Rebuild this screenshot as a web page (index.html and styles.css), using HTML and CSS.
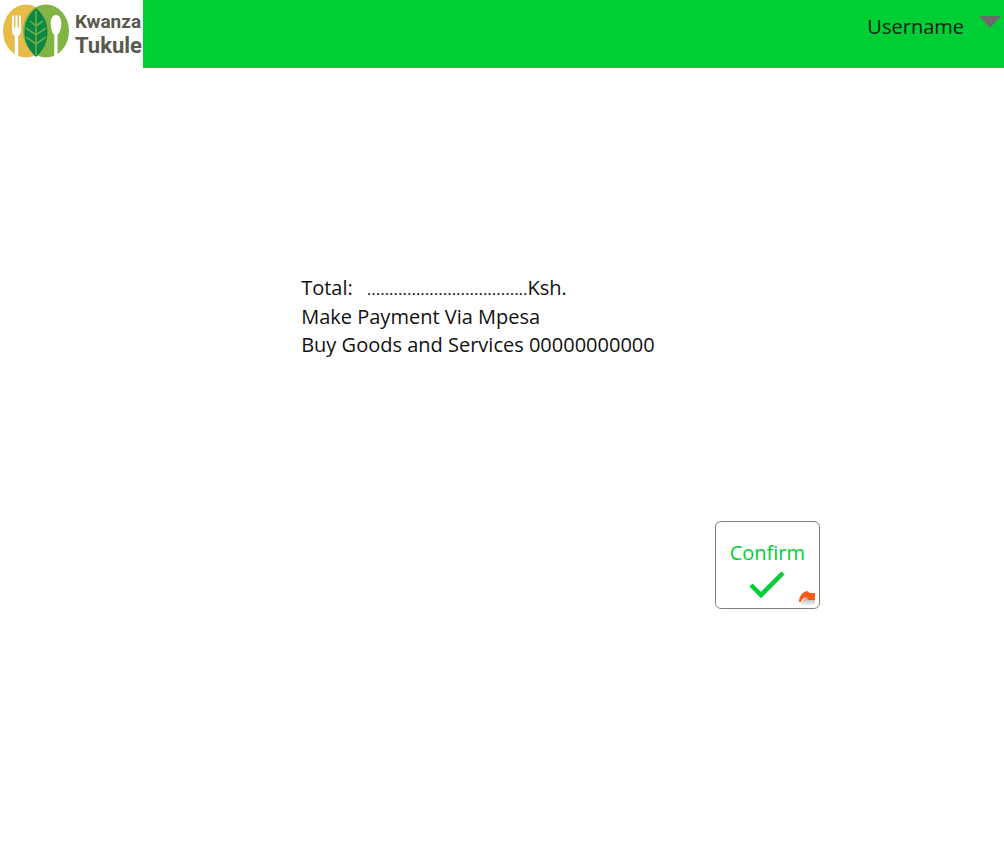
FILE: index.html
```html
<!DOCTYPE html>
<html lang="en">
<head>
<meta charset="utf-8">
<meta name="viewport" content="width=device-width, initial-scale=1">
<title>Kwanza Tukule - Payment</title>
<link rel="stylesheet" href="styles.css">
</head>
<body>
<header class="topbar">
  <a class="brand" href="#">
    <svg class="brand-mark" viewBox="0 0 66 54" aria-hidden="true">
      <ellipse cx="23" cy="27" rx="23" ry="26.500" fill="#e6bb48"/>
      <ellipse cx="43" cy="27" rx="23" ry="26.500" fill="#80b444"/>
      <path d="M33 4C25 11 21.500 19 21.500 29c0 9 4 17 11.500 24 7.500-7 11.500-15 11.500-24C44.500 19 41 11 33 4z" fill="#0d8543"/>
      <path d="M33 7V51M33 22l7-5M33 31l10-7M33 40l10-7M33 22l-6-5M33 31l-10-7M33 40l-10-7" fill="none" stroke="#6aac48" stroke-width="1.600"/>
      <path d="M9 11.500h2v12h1.500v-12h2v12H16v-12h2V27c0 3-1.500 4-2.800 5v20l-3.400-1V32C10.500 31 9 30 9 27z" fill="#fff"/>
      <path d="M53 11c3.800 0 5.300 4 5.300 9s-1.800 9-3.800 11v20l-3.200 1V31c-2-2-3.600-6-3.600-11s1.500-9 5.300-9z" fill="#fff"/>
    </svg>
    <span class="brand-name"><span class="brand-first">Kwanza</span><span class="brand-second">Tukule</span></span>
  </a>
  <button class="user-menu" type="button">
    <span>Username</span>
    <svg class="caret" viewBox="0 0 22 12" aria-hidden="true"><path d="M0 0h22L11 12z" fill="#6b6b6b"/></svg>
  </button>
</header>
<main class="payment">
  <section class="details">
    <p class="total"><span>Total:</span><span><span class="leader">....................................</span>Ksh.</span></p>
    <p>Make Payment Via Mpesa</p>
    <p>Buy Goods and Services 00000000000</p>
  </section>
  <button class="confirm" type="button">
    <span>Confirm</span>
    <svg class="check" viewBox="0 0 36 28" aria-hidden="true"><path d="M2 14l10 10L34 2" fill="none" stroke="#00ce35" stroke-width="4.500"/></svg>
    <svg class="badge" viewBox="0 0 20 18" aria-hidden="true">
      <defs><linearGradient id="shade" x1="0" y1="0" x2="0" y2="1"><stop offset="0" stop-color="#999"/><stop offset="1" stop-color="#fff"/></linearGradient></defs>
      <path d="M3 14L8 7l9 3v5l-4 2H4z" fill="url(#shade)"/>
      <path d="M1 13C1 8 4 3 9 2l3 2h5v7h-7l-1-3C6 8 4 10 3 13z" fill="#f95a16"/>
    </svg>
  </button>
</main>
</body>
</html>
```
FILE: styles.css
```css
* { box-sizing: border-box; }
body {
  margin: 0;
  background: #fff;
  color: #111;
  font-family: "Open Sans", "Noto Sans", sans-serif;
  font-size: 20px;
  line-height: 28px;
}
button { font: inherit; cursor: pointer; }
p { margin: 0; }
.topbar {
  display: flex;
  justify-content: space-between;
  align-items: flex-start;
  height: 68px;
  background: #00ce35;
}
.brand {
  display: flex;
  align-items: flex-start;
  gap: 6px;
  width: 143px;
  height: 68px;
  padding: 4px 0 0 3px;
  background: #fff;
  color: #5a594e;
  text-decoration: none;
}
.brand-mark { flex: none; width: 66px; height: 54px; }
.brand-name {
  display: flex;
  flex-direction: column;
  padding-top: 6px;
  font-family: Roboto, sans-serif;
  font-weight: 700;
  line-height: 24px;
}
.brand-first { font-size: 19px; }
.brand-second { font-size: 22px; }
.user-menu {
  display: flex;
  align-items: flex-start;
  gap: 15px;
  padding: 13px 3px 0 0;
  border: 0;
  background: none;
  color: #0c2411;
}
.caret { width: 22px; height: 12px; margin-top: 3px; }
.payment {
  display: flex;
  flex-direction: column;
  gap: 162px;
  padding: 206px 184px 40px 30%;
}
.total { display: flex; gap: 14px; }
.leader { font-size: 17px; }
.confirm {
  position: relative;
  display: flex;
  flex-direction: column;
  align-items: center;
  align-self: flex-end;
  gap: 4px;
  padding: 17px 14px 9px;
  border: 1px solid #808080;
  border-radius: 6px;
  background: #fff;
  color: #00ce35;
}
.check { width: 36px; height: 28px; }
.badge { position: absolute; right: 1px; bottom: 1px; width: 20px; height: 18px; }
```
